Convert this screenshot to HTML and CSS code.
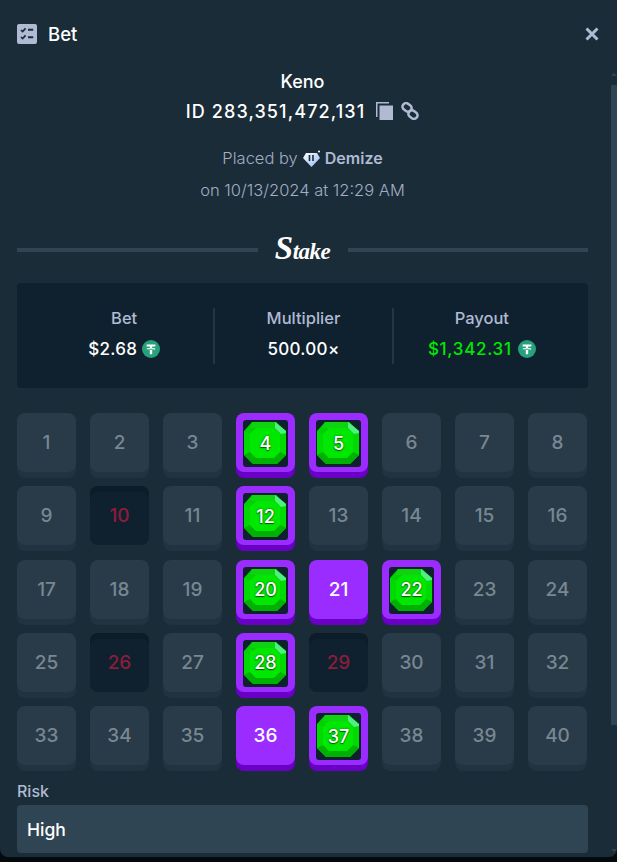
FILE: index.html
```html
<!DOCTYPE html>
<html lang="en">
<head>
<meta charset="utf-8">
<title>Bet</title>
<link rel="stylesheet" href="styles.css">
</head>
<body>
<svg class="defs" width="0" height="0" aria-hidden="true">
  <defs>
    <symbol id="tether" viewBox="0 0 18 18">
      <circle cx="9" cy="9" r="9" fill="#26a17b"/>
      <path d="M4.6 4.4h8.8v2.2h-3.2v1.3c1.9.1 3.3.5 3.3 1s-1.4.9-3.3 1v4.3H7.8v-4.3c-1.9-.1-3.300-.5-3.300-1s1.400-.9 3.300-1V6.600H4.600z" fill="#fff"/>
      <path d="M5.600 9.200c.6.3 1.900.5 3.400.5s2.800-.2 3.400-.5c-.6-.3-1.900-.5-3.400-.5s-2.800.2-3.400.5z" fill="#26a17b"/>
    </symbol>
    <symbol id="gem" viewBox="0 0 42 42">
      <polygon points="8,0 32,0 42,9 42,33 33,42 9,42 0,33 0,9" fill="#00cf02"/>
      <polygon points="8,0 32,0 36,6 6,6" fill="#0fd311"/>
      <polygon points="0,9 6,12 6,30 0,33" fill="#00d902"/>
      <polygon points="42,9 36,12 36,30 42,33" fill="#00d902"/>
      <polygon points="0,33 6,30 12,36 30,36 36,30 42,33 33,42 9,42" fill="#00b002"/>
      <polygon points="12,6 30,6 36,12 36,30 30,36 12,36 6,30 6,12" fill="#00e701"/>
      <polygon points="31,0 42,9 42,11 37,12 31,6" fill="#4ff080"/>
    </symbol>
  </defs>
</svg>
<main class="modal">
  <header class="modal-head">
    <div class="modal-title">
      <svg class="icon-list" viewBox="0 0 20 20" aria-hidden="true">
        <rect width="20" height="20" rx="2" fill="#b1bad3"/>
        <path d="M4 6l1.600 1.600L8.600 4.400M4 13l1.600 1.600 3-3.200" fill="none" stroke="#1a2c38" stroke-width="1.700"/>
        <path d="M11 5.800h5.200M11 13.200h5.200" stroke="#1a2c38" stroke-width="2"/>
      </svg>
      <span>Bet</span>
    </div>
    <svg class="icon-close" viewBox="0 0 14 14" aria-hidden="true">
      <path d="M1.500 1.500l11 11M12.500 1.500l-11 11" stroke="#b1bad3" stroke-width="3"/>
    </svg>
  </header>

  <section class="summary">
    <div class="game">Keno</div>
    <div class="bet-id">
      <span>ID 283,351,472,131</span>
      <svg class="icon-copy" viewBox="0 0 17 18" aria-hidden="true">
        <path d="M0 0h13v1.500H1.500V15H0z" fill="#b1bad3"/>
        <rect x="3.500" y="3.500" width="13.500" height="14.500" fill="#b1bad3"/>
      </svg>
      <svg class="icon-link" viewBox="0 0 18 18" aria-hidden="true">
        <g fill="none" stroke="#b1bad3" stroke-width="2.600">
          <rect x="1.500" y="1.800" width="9.500" height="7" rx="3.500" transform="rotate(35 6 5)"/>
          <rect x="7" y="9.200" width="9.500" height="7" rx="3.500" transform="rotate(35 12 13)"/>
        </g>
      </svg>
    </div>
    <div class="placed">
      <span>Placed by</span>
      <svg class="icon-vip" viewBox="0 0 19 17" aria-hidden="true">
        <defs>
          <linearGradient id="vip" x1="0" y1="0" x2="1" y2="1">
            <stop offset="0" stop-color="#ffffff"/>
            <stop offset="1" stop-color="#8fb6f5"/>
          </linearGradient>
        </defs>
        <polygon points="4,3 15,3 18,8 9.500,17 1,8" fill="url(#vip)"/>
        <path d="M7.500 5v6M11 5v6" stroke="#1a2c38" stroke-width="1.600"/>
        <circle cx="17" cy="1.500" r="1" fill="#fff"/>
      </svg>
      <strong>Demize</strong>
    </div>
    <div class="placed-date">on 10/13/2024 at 12:29 AM</div>
  </section>

  <div class="brand">
    <span class="brand-line"></span>
    <span class="brand-logo">Stake</span>
    <span class="brand-line"></span>
  </div>

  <section class="stats">
    <div class="stat">
      <div class="stat-label">Bet</div>
      <div class="stat-value">$2.68 <svg class="coin"><use href="#tether"/></svg></div>
    </div>
    <div class="stat">
      <div class="stat-label">Multiplier</div>
      <div class="stat-value">500.00×</div>
    </div>
    <div class="stat">
      <div class="stat-label">Payout</div>
      <div class="stat-value win">$1,342.31 <svg class="coin"><use href="#tether"/></svg></div>
    </div>
  </section>

  <section class="board">
    <div class="tile">1</div><div class="tile">2</div><div class="tile">3</div>
    <div class="tile hit"><svg class="gem"><use href="#gem"/></svg><span>4</span></div>
    <div class="tile hit"><svg class="gem"><use href="#gem"/></svg><span>5</span></div>
    <div class="tile">6</div><div class="tile">7</div><div class="tile">8</div>
    <div class="tile">9</div><div class="tile miss">10</div><div class="tile">11</div>
    <div class="tile hit"><svg class="gem"><use href="#gem"/></svg><span>12</span></div>
    <div class="tile">13</div><div class="tile">14</div><div class="tile">15</div><div class="tile">16</div>
    <div class="tile">17</div><div class="tile">18</div><div class="tile">19</div>
    <div class="tile hit"><svg class="gem"><use href="#gem"/></svg><span>20</span></div>
    <div class="tile picked">21</div>
    <div class="tile hit"><svg class="gem"><use href="#gem"/></svg><span>22</span></div>
    <div class="tile">23</div><div class="tile">24</div>
    <div class="tile">25</div><div class="tile miss">26</div><div class="tile">27</div>
    <div class="tile hit"><svg class="gem"><use href="#gem"/></svg><span>28</span></div>
    <div class="tile miss">29</div><div class="tile">30</div><div class="tile">31</div><div class="tile">32</div>
    <div class="tile">33</div><div class="tile">34</div><div class="tile">35</div>
    <div class="tile picked">36</div>
    <div class="tile hit"><svg class="gem"><use href="#gem"/></svg><span>37</span></div>
    <div class="tile">38</div><div class="tile">39</div><div class="tile">40</div>
  </section>

  <section class="risk">
    <div class="risk-label">Risk</div>
    <div class="risk-input">High</div>
  </section>

  <div class="scrollbar" aria-hidden="true">
    <span class="arrow up"></span>
    <span class="thumb"></span>
    <span class="arrow down"></span>
  </div>
</main>
</body>
</html>
```
FILE: styles.css
```css
* { box-sizing: border-box; }
html, body { margin: 0; height: 100%; background: #050a0e; }
body { font-family: Inter, "Noto Sans", sans-serif; overflow: hidden; }
.defs { position: absolute; }

.modal {
  position: relative;
  width: 617px;
  height: 857px;
  padding: 0 29px 0 17px;
  background: #1a2c38;
  border-radius: 0 0 8px 8px;
  overflow: hidden;
  color: #fff;
}

.modal-head {
  display: flex;
  align-items: center;
  justify-content: space-between;
  height: 68px;
  margin-right: -12px;
}
.modal-title {
  display: flex;
  align-items: center;
  gap: 11px;
  font-size: 18.500px;
  font-weight: 500;
}
.icon-list { width: 20px; height: 20px; }
.icon-close { width: 14px; height: 14px; margin-right: 1px; }

.summary {
  display: flex;
  flex-direction: column;
  align-items: center;
}
.game { font-size: 18px; font-weight: 500; line-height: 28px; }
.bet-id {
  display: flex;
  align-items: center;
  height: 30px;
  font-size: 18px;
  font-weight: 500;
  letter-spacing: 1.100px;
}
.icon-copy { width: 17px; height: 18px; margin-left: 11px; }
.icon-link { width: 18px; height: 18px; margin-left: 8px; }
.placed {
  display: flex;
  align-items: center;
  gap: 4px;
  margin-top: 17px;
  height: 30px;
  font-size: 16.500px;
  font-weight: 300;
  color: #a3adc4;
}
.placed strong { font-size: 16px; font-weight: 600; color: #b1bad3; }
.icon-vip { width: 19px; height: 17px; }
.placed-date {
  height: 30px;
  margin-top: 2px;
  display: flex;
  align-items: center;
  font-size: 16.500px;
  font-weight: 300;
  color: #a3adc4;
}

.brand {
  display: flex;
  align-items: center;
  margin-top: 30px;
  height: 30px;
}
.brand-line { flex: 1; height: 4px; background: #2f4553; }
.brand-logo {
  width: 90px;
  text-align: center;
  font-family: "Liberation Serif", serif;
  font-style: italic;
  font-weight: 700;
  font-size: 23px;
  line-height: 30px;
  letter-spacing: -0.500px;
  color: #fff;
}
.brand-logo::first-letter { font-size: 33px; }

.stats {
  display: grid;
  grid-template-columns: repeat(3, 1fr);
  margin-top: 18px;
  padding: 25px 18px 24px;
  height: 105px;
  border-radius: 4px;
  background: #0f212e;
}
.stat {
  display: flex;
  flex-direction: column;
  align-items: center;
  border-left: 2px solid #213743;
}
.stat:first-child { border-left: 0; }
.stat-label {
  font-size: 16.500px;
  font-weight: 500;
  line-height: 20px;
  color: #b1bad3;
}
.stat-value {
  display: flex;
  align-items: center;
  gap: 5px;
  margin-top: 11px;
  font-size: 17px;
  font-weight: 500;
  line-height: 20px;
  letter-spacing: 0.300px;
}
.win { color: #00e701; gap: 6px; letter-spacing: 0.700px; }
.coin { width: 18px; height: 18px; }

.board {
  display: grid;
  grid-template-columns: repeat(8, 59px);
  grid-auto-rows: 59px;
  column-gap: 14px;
  row-gap: 14.250px;
  margin-top: 25px;
}
.tile {
  position: relative;
  display: flex;
  align-items: center;
  justify-content: center;
  border-radius: 8px;
  font-size: 19px;
  font-weight: 500;
  background: #293b48;
  color: #788792;
  box-shadow: 0 6px 0 #213340;
}
.picked {
  background: #9b2cff;
  color: #fff;
  box-shadow: 0 6px 0 #6a00c6;
}
.miss {
  background: #0f212e;
  color: #8a1d3c;
  box-shadow: inset 0 6px 0 #0c1c28;
}
.hit {
  background: #9b2cff;
  box-shadow: 0 6px 0 #6a00c6;
  color: #fff;
  font-size: 18px;
  padding-top: 1px;
}
.hit::before {
  content: "";
  position: absolute;
  inset: 7px 7px 5px;
  border-radius: 3px;
  background: #0f212e;
}
.hit span {
  position: relative;
  text-shadow: 0 0 2px #005f00, 0 1px 1px #005f00;
}
.gem {
  position: absolute;
  top: 9px;
  left: 8px;
  width: 42px;
  height: 42px;
}

.risk { margin-top: 14px; }
.risk-label {
  font-size: 16px;
  font-weight: 500;
  line-height: 24px;
  color: #b1bad3;
}
.risk-input {
  display: flex;
  align-items: center;
  height: 48px;
  margin-top: 2px;
  padding-left: 10px;
  border-radius: 4px;
  background: #2f4553;
  font-size: 17.500px;
  font-weight: 500;
}

.scrollbar {
  position: absolute;
  top: 72px;
  right: 0;
  bottom: 0;
  width: 6px;
  display: flex;
  flex-direction: column;
}
.thumb { height: 640px; margin-top: 9px; background: #2f4553; }
.arrow { display: block; width: 0; height: 0; border: 3px solid transparent; }
.arrow.up { margin-top: 1px; border-bottom-color: #2f4553; border-top-width: 0; }
.arrow.down { margin-top: auto; margin-bottom: 5px; border-top-color: #2f4553; border-bottom-width: 0; }
```
